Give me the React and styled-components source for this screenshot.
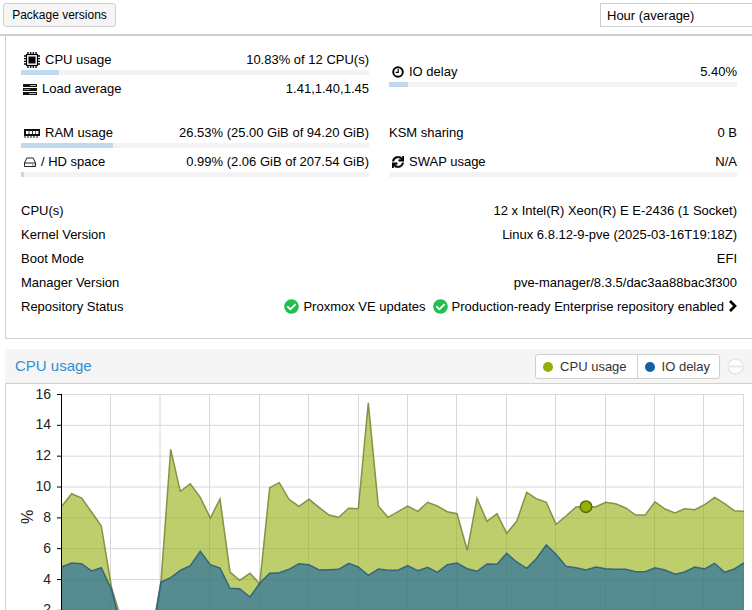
import React from 'react';
import styled, { createGlobalStyle } from 'styled-components';
import { FaSync, FaCheckCircle } from 'react-icons/fa';

const Global = createGlobalStyle`
  html, body { margin: 0; padding: 0; background: #fff; overflow: hidden; }
  body { font-family: "Liberation Sans", Arial, sans-serif; font-size: 13px; color: #000; }
`;

const Page = styled.div`
  width: 752px;
  height: 610px;
  overflow: hidden;
`;

const Toolbar = styled.div`
  display: flex;
  align-items: center;
  justify-content: space-between;
  box-sizing: border-box;
  width: 752px;
  height: 36px;
  padding: 0 0 4px 3px;
  border-bottom: 2px solid #d0d0d0;
`;

const Button = styled.button`
  box-sizing: border-box;
  width: 113px;
  height: 24px;
  padding: 0;
  background: #f5f5f5;
  border: 1px solid #cfcfcf;
  border-radius: 3px;
  font: 12px "Liberation Sans", Arial, sans-serif;
  color: #000;
`;

const Select = styled.div`
  box-sizing: border-box;
  width: 180px;
  height: 24px;
  margin-right: -28px;
  padding-left: 6px;
  line-height: 23px;
  background: #fff;
  border: 1px solid #cfcfcf;
  font-size: 13px;
`;

const StatusPanel = styled.section`
  box-sizing: border-box;
  width: 780px;
  height: 303px;
  margin-left: 5px;
  padding: 14px 0 0 15px;
  border-left: 1px solid #cfcfcf;
  border-bottom: 1px solid #cfcfcf;
`;

const StatGrid = styled.div`
  display: grid;
  grid-template-columns: 348px 348px;
  column-gap: 20px;
  row-gap: 20px;
  align-items: center;
`;

const StatGroup = styled.div`
  display: flex;
  flex-direction: column;
`;

const Stat = styled.div`
  height: ${(p) => (p.$compact ? 24 : 29)}px;
`;

const StatLine = styled.div`
  display: flex;
  align-items: center;
  justify-content: space-between;
  box-sizing: border-box;
  height: 18px;
  padding-top: 2px;
  line-height: 16px;
`;

const StatName = styled.span`
  display: flex;
  align-items: center;
`;

const IconSlot = styled.span`
  display: inline-flex;
  align-items: center;
  justify-content: center;
  width: ${(p) => p.$w}px;
  margin-left: ${(p) => p.$ml}px;
  margin-right: ${(p) => p.$mr}px;
`;

const Track = styled.div`
  height: 5px;
  margin-top: 2px;
  background: #f3f3f3;
`;

const Fill = styled.div`
  height: 100%;
  background: #c0d9ef;
`;

const InfoList = styled.div`
  margin-top: 17px;
`;

const InfoRow = styled.div`
  display: flex;
  align-items: center;
  justify-content: space-between;
  width: 716px;
  height: 24px;
`;

const RepoStatus = styled.span`
  display: flex;
  align-items: center;
`;

const OkIcon = styled(FaCheckCircle)`
  width: 15px;
  height: 15px;
  margin: 0 4px 0 7px;
  color: #21bf4b;
`;

const ChevronSvg = styled.svg`
  width: 9px;
  height: 12px;
  margin-left: 4px;
`;

const ChartPanel = styled.section`
  width: 780px;
  margin: 10px 0 0 5px;
`;

const ChartHeader = styled.header`
  display: flex;
  align-items: center;
  justify-content: space-between;
  box-sizing: border-box;
  width: 747px;
  height: 35px;
  padding: 0 8px 0 10px;
  background: #f5f5f5;
  border-bottom: 1px solid #d0d0d0;
`;

const ChartTitle = styled.h2`
  margin: -2px 0 0;
  font-size: 15px;
  font-weight: 400;
  color: #2f8fd5;
`;

const HeaderTools = styled.div`
  display: flex;
  align-items: center;
  gap: 7px;
`;

const Legend = styled.div`
  display: flex;
  height: 25px;
  box-sizing: border-box;
  background: #fff;
  border: 1px solid #cfcfcf;
  border-radius: 3px;
`;

const LegendItem = styled.div`
  display: flex;
  align-items: center;
  gap: 7px;
  padding: 0 ${(p) => p.$pr}px 0 7px;
  font-size: 13px;
  color: #333;
  & + & { border-left: 1px solid #cfcfcf; }
`;

const Dot = styled.span`
  width: 10px;
  height: 10px;
  margin-top: 2px;
  border-radius: 50%;
  background: ${(p) => p.$color};
`;

const ChartBody = styled.div`
  height: 260px;
  border-left: 1px solid #cfcfcf;
`;

const ChartSvg = styled.svg`
  display: block;
  width: 746px;
  height: 260px;
`;

const CpuIcon = () => (
  <svg width="16" height="16" viewBox="0 0 16 16">
    <rect x="2.5" y="2.5" width="11" height="11" fill="#fff" stroke="#000" strokeWidth="1.2" />
    <rect x="4.5" y="4.5" width="7" height="7" fill="#000" />
    <path d="M4 0v2M6.7 0v2M9.3 0v2M12 0v2M4 14v2M6.7 14v2M9.3 14v2M12 14v2M0 4h2M0 6.7h2M0 9.3h2M0 12h2M14 4h2M14 6.7h2M14 9.3h2M14 12h2" stroke="#000" strokeWidth="1.3" />
  </svg>
);

const TasksIcon = () => (
  <svg width="14" height="11" viewBox="0 0 14 11">
    <rect x="0" y="0" width="14" height="3" fill="#111" />
    <rect x="7" y="1" width="6" height="1" fill="#bbb" />
    <rect x="0" y="4" width="14" height="3" fill="#111" />
    <rect x="1" y="5" width="6" height="1" fill="#888" />
    <rect x="0" y="8" width="14" height="3" fill="#111" />
    <rect x="6" y="9" width="7" height="1" fill="#bbb" />
  </svg>
);

const RamIcon = () => (
  <svg width="16" height="9" viewBox="0 0 16 9">
    <rect x="0" y="0" width="16" height="7" fill="#111" />
    <rect x="2" y="2" width="2.6" height="3" fill="#fff" />
    <rect x="5.4" y="2" width="2.6" height="3" fill="#fff" />
    <rect x="8.8" y="2" width="2.6" height="3" fill="#fff" />
    <rect x="12" y="2" width="2.4" height="3" fill="#fff" />
    <path d="M1 7v2M4 7v2M7 7v2M10 7v2M13 7v2" stroke="#111" strokeWidth="1" />
  </svg>
);

const HddIcon = () => (
  <svg width="12" height="11" viewBox="0 0 12 11" fill="none">
    <path d="M2.8 1h6.4L11.5 6v3.5h-11V6z" stroke="#222" strokeWidth="1" />
    <path d="M.5 6h11" stroke="#222" strokeWidth="1" />
    <path d="M8 8h1M9.8 8h.8" stroke="#444" strokeWidth="1" />
  </svg>
);

const ClockIcon = () => (
  <svg width="12" height="12" viewBox="0 0 12 12" fill="none">
    <circle cx="6" cy="6" r="4.8" stroke="#000" strokeWidth="1.9" />
    <path d="M6.2 3v3.4H3.6" stroke="#000" strokeWidth="1.2" />
  </svg>
);

const ChevronIcon = () => (
  <ChevronSvg viewBox="0 0 9 12" fill="none">
    <path d="M2 1l5 5-5 5" stroke="#000" strokeWidth="2.7" />
  </ChevronSvg>
);

const ToolIcon = () => (
  <svg width="17" height="17" viewBox="0 0 17 17">
    <circle cx="8.5" cy="8.5" r="7.5" fill="#fcfdfe" stroke="#d6e4f0" strokeWidth="1.2" />
    <path d="M2.5 8.5h12" stroke="#d6e4f0" strokeWidth="1.4" />
  </svg>
);

const cpuPts = [
  [62,506],[71.7,493.7],[81.7,498],[91.7,512.3],[101.3,526],[111.7,588.3],[121.5,620],[131.5,641],[151,641],[161,581.7],
  [170.7,449.3],[180.3,491.3],[190.3,483.7],[200.3,497.3],[210.3,518],[220,499],[230,572],[239.7,580.3],[250,573.3],[259.7,584],
  [269.7,487.7],[279.3,482.7],[289,499.3],[299,506.3],[309,499.3],[319,507.3],[329,515],[338.7,517.3],[348.7,508.3],[358.3,508.7],
  [368.3,402.7],[378.3,506],[388,517.3],[398,511.7],[407.7,506],[417.7,511.3],[427.7,502.3],[437.3,506],[447.3,511.7],[457,513.7],
  [467.3,550.3],[477,498.3],[487,521.3],[497,513.7],[506.7,533.3],[516.7,521.3],[526.7,492.3],[536.3,498.7],[546.3,502.3],[556,524.3],
  [566,516],[576,507],[586,506.7],[596,506.7],[605.7,502.3],[615.7,503.7],[625.7,508],[635.7,515],[645.3,515],[655,501.7],
  [665,509],[675,513],[684.7,508.7],[694.7,509.7],[704.7,504.7],[714.7,497.3],[724.7,503.7],[734.3,510.7],[744,511.3],
];

const ioPts = [
  [62,566.7],[71.7,563],[81.7,563.7],[91.7,571],[101.3,567.7],[111.7,590],[121.5,630],[131.5,641],[151,641],[161,582],
  [170.7,577.7],[180.3,570.3],[190.3,565.7],[200.3,551.3],[210.3,564.7],[220,568],[230,588.3],[239.7,588.7],[250,597],[259.7,583.3],
  [269.7,573.3],[279.3,572.7],[289,569.3],[299,563.7],[309,564.7],[319,570],[329,569.7],[338.7,569.3],[348.7,563.3],[358.3,567],
  [368.3,575.3],[378.3,569],[388,570.3],[398,570.3],[407.7,565.7],[417.7,570.7],[427.7,567.3],[437.3,572.3],[447.3,564.7],[457,563],
  [467.3,568.7],[477,571.3],[487,564],[497,564.3],[506.7,553.3],[516.7,562],[526.7,568.3],[536.3,558.7],[546.3,545],[556,554.3],
  [566,566.3],[576,567.7],[586,570],[596,567],[605.7,568.7],[615.7,569.3],[625.7,569.3],[635.7,571.7],[645.3,571.7],[655,567.7],
  [665,570],[675,574.3],[684.7,572],[694.7,567],[704.7,569],[714.7,563.3],[724.7,572.3],[734.3,569],[744,563],
];

const line = (pts) => pts.map((p) => p.join(',')).join(' ');
const area = (pts) => `61.5,644 ${line(pts)} 744,644`;

const vGrid = [110.5, 160, 209.5, 259.5, 308.5, 358.5, 407.5, 456.5, 506.5, 555.5, 605.5, 654.5, 703.5, 743.5];
const ticks = [16, 14, 12, 10, 8, 6, 4, 2].map((v) => ({ v, y: 394.5 + (16 - v) * 15.42 }));

const CpuChart = () => (
  <ChartSvg viewBox="6 384 746 260">
    {ticks.map((t) => (
      <line key={t.v} x1="61.5" x2="743.5" y1={t.y} y2={t.y} stroke="#d8d8d8" strokeWidth="1" />
    ))}
    {vGrid.map((x) => (
      <line key={x} x1={x} x2={x} y1="394.5" y2="644" stroke="#d8d8d8" strokeWidth="1" />
    ))}
    <polygon points={area(cpuPts)} fill="#94ae0a" fillOpacity="0.6" />
    <polyline points={line(cpuPts)} fill="none" stroke="#7a8a3a" strokeOpacity="0.9" strokeWidth="1.5" />
    <polygon points={area(ioPts)} fill="#115fa6" fillOpacity="0.6" />
    <polyline points={line(ioPts)} fill="none" stroke="#2a6078" strokeOpacity="0.9" strokeWidth="1.5" />
    <circle cx="586" cy="506.7" r="5.8" fill="#94ae0a" stroke="#5b6e00" strokeWidth="1.5" />
    <line x1="61.5" x2="61.5" y1="394" y2="644" stroke="#000" strokeWidth="1" />
    {ticks.map((t) => (
      <g key={t.v}>
        <line x1="57" x2="61.5" y1={t.y} y2={t.y} stroke="#000" strokeWidth="1" />
        <text x="51" y={t.y + 4} textAnchor="end" fontFamily="'Liberation Sans', Arial, sans-serif" fontSize="14" fill="#222">{t.v}</text>
      </g>
    ))}
    <text transform="translate(32.5 517) rotate(-90)" textAnchor="middle" fontFamily="'Liberation Sans', Arial, sans-serif" fontSize="16" fill="#222">%</text>
  </ChartSvg>
);

const StatItem = ({ icon, w = 0, ml = 0, mr = 0, name, value, fill, compact }) => (
  <Stat $compact={compact}>
    <StatLine>
      <StatName>
        {icon && <IconSlot $w={w} $ml={ml} $mr={mr}>{icon}</IconSlot>}
        {name}
      </StatName>
      <span>{value}</span>
    </StatLine>
    {fill !== undefined && (
      <Track>
        <Fill style={{ width: `${fill}%` }} />
      </Track>
    )}
  </Stat>
);

const info = [
  ['CPU(s)', '12 x Intel(R) Xeon(R) E E-2436 (1 Socket)'],
  ['Kernel Version', 'Linux 6.8.12-9-pve (2025-03-16T19:18Z)'],
  ['Boot Mode', 'EFI'],
  ['Manager Version', 'pve-manager/8.3.5/dac3aa88bac3f300'],
];

export default function App() {
  return (
    <Page>
      <Global />
      <Toolbar>
        <Button>Package versions</Button>
        <Select>Hour (average)</Select>
      </Toolbar>
      <StatusPanel>
        <StatGrid>
          <StatGroup>
            <StatItem icon={<CpuIcon />} w={16} ml={3} mr={5} name="CPU usage" value="10.83% of 12 CPU(s)" fill={10.83} />
            <StatItem icon={<TasksIcon />} w={14} ml={2} mr={5} name="Load average" value="1.41,1.40,1.45" compact />
          </StatGroup>
          <StatGroup>
            <StatItem icon={<ClockIcon />} w={12} ml={3} mr={5} name="IO delay" value="5.40%" fill={5.4} />
          </StatGroup>
          <StatGroup>
            <StatItem icon={<RamIcon />} w={16} ml={3} mr={5} name="RAM usage" value="26.53% (25.00 GiB of 94.20 GiB)" fill={26.53} />
            <StatItem icon={<HddIcon />} w={12} ml={3} mr={5} name="/ HD space" value="0.99% (2.06 GiB of 207.54 GiB)" fill={0.99} />
          </StatGroup>
          <StatGroup>
            <StatItem name="KSM sharing" value="0 B" />
            <StatItem icon={<FaSync size={12} stroke="#000" strokeWidth={20} />} w={12} ml={3} mr={5} name="SWAP usage" value="N/A" fill={0} />
          </StatGroup>
        </StatGrid>
        <InfoList>
          {info.map(([k, v]) => (
            <InfoRow key={k}>
              <span>{k}</span>
              <span>{v}</span>
            </InfoRow>
          ))}
          <InfoRow>
            <span>Repository Status</span>
            <RepoStatus>
              <OkIcon />
              Proxmox VE updates
              <OkIcon />
              Production-ready Enterprise repository enabled
              <ChevronIcon />
            </RepoStatus>
          </InfoRow>
        </InfoList>
      </StatusPanel>
      <ChartPanel>
        <ChartHeader>
          <ChartTitle>CPU usage</ChartTitle>
          <HeaderTools>
            <Legend>
              <LegendItem $pr={10}><Dot $color="#94ae0a" />CPU usage</LegendItem>
              <LegendItem $pr={9}><Dot $color="#115fa6" />IO delay</LegendItem>
            </Legend>
            <ToolIcon />
          </HeaderTools>
        </ChartHeader>
        <ChartBody>
          <CpuChart />
        </ChartBody>
      </ChartPanel>
    </Page>
  );
}
